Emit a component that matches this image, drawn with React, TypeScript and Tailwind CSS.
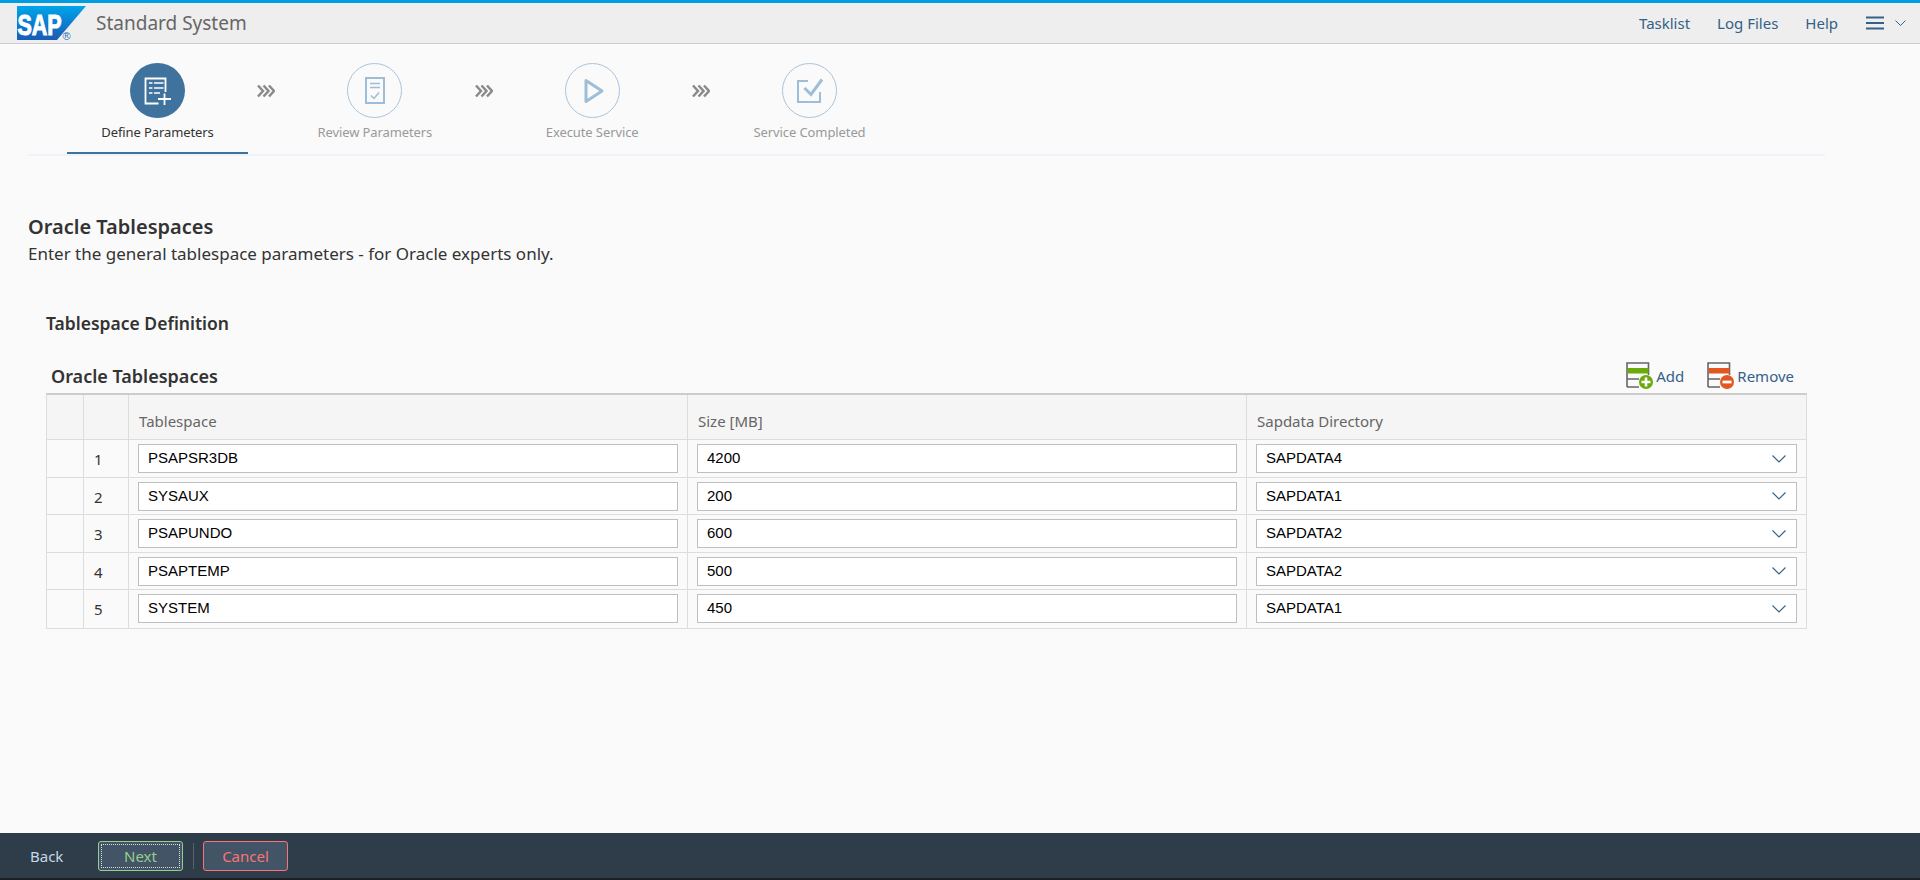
import React from "react";

const F = "font-['Noto_Sans',sans-serif]";

function Logo() {
  return (
    <svg width="70" height="40" viewBox="0 -3 70 40" className="shrink-0">
      <defs>
        <linearGradient id="sapg" x1="0" y1="0" x2="0" y2="1">
          <stop offset="0" stopColor="#00a6ea" />
          <stop offset="0.5" stopColor="#0a7fd0" />
          <stop offset="1" stopColor="#1a5cb4" />
        </linearGradient>
      </defs>
      <polygon points="0,0 69,0 40,34 0,34" fill="url(#sapg)" />
      <text transform="translate(0.5 29) scale(1 1.36)" fontFamily="'Liberation Sans',sans-serif" fontWeight="700" fontSize="21.5" fill="#fff" stroke="#fff" strokeWidth="0.8">SAP</text>
      <text x="45.6" y="33.6" fontFamily="'Liberation Sans',sans-serif" fontSize="11" fill="#2a6fb8">®</text>
    </svg>
  );
}

function StepIcon({ n, c }: { n: number; c: string }) {
  if (n === 0)
    return (
      <svg width="28" height="28" viewBox="0 0 28 28" fill="none" stroke={c} strokeWidth="1.8">
        <path d="M14.5 26.5H1.5V1.5H21.5V15" />
        <path d="M5 6H8.5M10 6H19.5M5 11H8.5M10 11H19.5M5 16H8.5M10 16H16" strokeWidth="1.7" />
        <path d="M14 22H27M20.5 16.5V28" strokeWidth="1.8" />
      </svg>
    );
  if (n === 1)
    return (
      <svg width="20" height="27" viewBox="0 0 20 27" fill="none" stroke={c} strokeWidth="2">
        <path d="M1 1H19V26H1Z" />
        <path d="M5 6.5H15M5 10.5H15" strokeWidth="1.6" />
        <path d="M6 18.5L9 21.5L14 15.5" strokeWidth="1.5" />
      </svg>
    );
  if (n === 2)
    return (
      <svg width="20" height="26" viewBox="0 0 20 26" fill="none" stroke={c} strokeWidth="3" strokeLinejoin="round" className="ml-[3px]">
        <path d="M2 2.5V23.5L18 13Z" />
      </svg>
    );
  return (
    <svg width="28" height="28" viewBox="0 0 28 28" fill="none" stroke={c} strokeWidth="2">
      <path d="M12 4H2V25H24V15" />
      <path d="M8.5 11L15 17.5L26 2.5" strokeWidth="3" />
    </svg>
  );
}

function Chevrons() {
  return (
    <svg width="18" height="14" viewBox="0 0 18 14" fill="none" stroke="#8a8a8a" strokeWidth="2.5">
      <path d="M1 1.5L6 7L1 12.5M6.5 1.5L11.5 7L6.5 12.5M12 1.5L17 7L12 12.5" />
    </svg>
  );
}

function Step({ n, label, active }: { n: number; label: string; active?: boolean }) {
  return (
    <div className="w-[181px] h-[110px] flex flex-col items-center pt-[19px] relative">
      <div className={`w-[55px] h-[55px] rounded-full flex items-center justify-center ${active ? "bg-[#3f729c]" : "border border-[#a9c4dc]"}`}>
        <StepIcon n={n} c={active ? "#ffffff" : "#9dbdd8"} />
      </div>
      <div className={`mt-[5px] text-[13px] tracking-[-0.1px] leading-[18px] whitespace-nowrap ${active ? "text-[#333333]" : "text-[#999999]"}`}>{label}</div>
      {active && <div className="absolute left-0 right-0 bottom-0 h-[2px] bg-[#3f729c]" />}
    </div>
  );
}

function TableIcon({ c, plus }: { c: string; plus: boolean }) {
  return (
    <svg width="27" height="27" viewBox="0 0 27 27" fill="none" className="shrink-0">
      <path d="M1 25V1H22.5V13M1 25H13M1 17H13" stroke="#666666" strokeWidth="1.6" />
      <rect x="1.5" y="6" width="21" height="5.5" fill={c} />
      <circle cx="20" cy="20" r="7" fill={c} />
      {plus ? (
        <path d="M15.5 20H24.5M20 15.5V24.5" stroke="#fff" strokeWidth="2.6" />
      ) : (
        <path d="M15.5 20H24.5" stroke="#fff" strokeWidth="2.8" />
      )}
    </svg>
  );
}

const rows = [
  ["1", "PSAPSR3DB", "4200", "SAPDATA4"],
  ["2", "SYSAUX", "200", "SAPDATA1"],
  ["3", "PSAPUNDO", "600", "SAPDATA2"],
  ["4", "PSAPTEMP", "500", "SAPDATA2"],
  ["5", "SYSTEM", "450", "SAPDATA1"],
];

const cols = "grid grid-cols-[37px_45px_559px_559px_1fr]";
const cell = "border-r border-[#dddddd] last:border-r-0";

function Field({ value, select }: { value: string; select?: boolean }) {
  return (
    <div className="h-[29px] mx-[9px] bg-white border border-[#bfbfbf] flex items-center justify-between pl-[9px] pr-[10px] text-[15px] text-black font-['Liberation_Sans',sans-serif]">
      <span>{value}</span>
      {select && (
        <svg width="14" height="8" viewBox="0 0 14 8" fill="none" stroke="#346187" strokeWidth="1.1">
          <path d="M0.5 0.5L7 7L13.5 0.5" />
        </svg>
      )}
    </div>
  );
}

export default function App() {
  return (
    <div className={`h-[880px] w-[1920px] flex flex-col bg-[#fafafa] overflow-hidden ${F}`}>
      <header className="h-[44px] shrink-0 border-t-[3px] border-t-[#009de0] border-b border-b-[#cccccc] bg-[#eeeeee] flex items-center pl-[17px] pr-[14px]">
        <Logo />
        <div className="ml-[9px] text-[19px] text-[#666666]">Standard System</div>
        <nav className="ml-auto flex items-center text-[15px] text-[#346187]">
          <span>Tasklist</span>
          <span className="ml-[27px]">Log Files</span>
          <span className="ml-[27px]">Help</span>
          <svg className="ml-[28px]" width="18" height="14" viewBox="0 0 18 14" fill="none" stroke="#346187" strokeWidth="2">
            <path d="M0 1.5H18M0 7H18M0 12.5H18" />
          </svg>
          <svg className="ml-[11px]" width="11" height="7" viewBox="0 0 11 7" fill="none" stroke="#346187" strokeWidth="1">
            <path d="M0.5 0.5L5.5 5.5L10.5 0.5" />
          </svg>
        </nav>
      </header>

      <div className="ml-[28px] w-[1797px] h-[112px] shrink-0 border-b-2 border-b-[#edf3f8] flex items-start pl-[39px]">
        <Step n={0} label="Define Parameters" active />
        <div className="w-[36.35px] pt-[40px] flex justify-center"><Chevrons /></div>
        <Step n={1} label="Review Parameters" />
        <div className="w-[36.35px] pt-[40px] flex justify-center"><Chevrons /></div>
        <Step n={2} label="Execute Service" />
        <div className="w-[36.35px] pt-[40px] flex justify-center"><Chevrons /></div>
        <Step n={3} label="Service Completed" />
      </div>

      <main className="flex-1 min-h-0 pt-[57px] pl-[28px]">
        <h1 className="text-[20px] leading-[28px] font-semibold text-[#333333]">Oracle Tablespaces</h1>
        <p className="text-[17px] leading-[24px] mt-[1px] text-[#333333]">Enter the general tablespace parameters - for Oracle experts only.</p>

        <div className="ml-[18px] w-[1761px] mt-[45px]">
          <h2 className="text-[17.5px] leading-[24px] font-semibold text-[#333333]">Tablespace Definition</h2>
          <div className="flex items-center justify-between h-[27px] mt-[27px] mb-[4px] pl-[5px] pr-[13px]">
            <h3 className="text-[18px] leading-[24px] font-semibold text-[#333333]">Oracle Tablespaces</h3>
            <div className="flex items-center text-[15px] text-[#346187]">
              <TableIcon c="#6aaa0a" plus />
              <span className="ml-[3px] mt-[1px]">Add</span>
              <span className="ml-[23px] flex items-center">
                <TableIcon c="#e2571f" plus={false} />
                <span className="ml-[3px] mt-[1px]">Remove</span>
              </span>
            </div>
          </div>
          <div className="border border-[#dddddd] border-t-2 border-t-[#cccccc]">
            <div className={`${cols} h-[45px] bg-[#f5f5f5] border-b border-[#dddddd] text-[15px] text-[#666666]`}>
              <div className={cell} />
              <div className={cell} />
              <div className={`${cell} pl-[10px] pt-[15px]`}>Tablespace</div>
              <div className={`${cell} pl-[10px] pt-[15px]`}>Size [MB]</div>
              <div className={`${cell} pl-[10px] pt-[15px]`}>Sapdata Directory</div>
            </div>
            {rows.map((r) => (
              <div key={r[0]} className={`${cols} h-[37.5px] border-b border-[#dddddd] last:border-b-0`}>
                <div className={cell} />
                <div className={`${cell} pl-[10px] pt-[8px] text-[15px] text-[#333333]`}>{r[0]}</div>
                <div className={`${cell} pt-[4px]`}><Field value={r[1]} /></div>
                <div className={`${cell} pt-[4px]`}><Field value={r[2]} /></div>
                <div className={`${cell} pt-[4px]`}><Field value={r[3]} select /></div>
              </div>
            ))}
          </div>
        </div>
      </main>

      <footer className="h-[47px] shrink-0 bg-[#2f3d4a] border-b-2 border-b-[#1c2024] flex items-center text-[15px] pt-[1px]">
        <span className="ml-[30px] w-[68px] text-[#c5d8ea]">Back</span>
        <button className="w-[85px] h-[30px] rounded-[3px] border border-[#93cf8e] bg-[#435467] text-[#93cf8e] outline-1 outline-dotted outline-white/80 outline-offset-[-4px]">Next</button>
        <div className="mx-[9.5px] w-px h-[26px] bg-[#56646f]" />
        <button className="w-[85px] h-[30px] rounded-[3px] border border-[#f87575] bg-[#435467] text-[#f87575]">Cancel</button>
      </footer>
    </div>
  );
}
